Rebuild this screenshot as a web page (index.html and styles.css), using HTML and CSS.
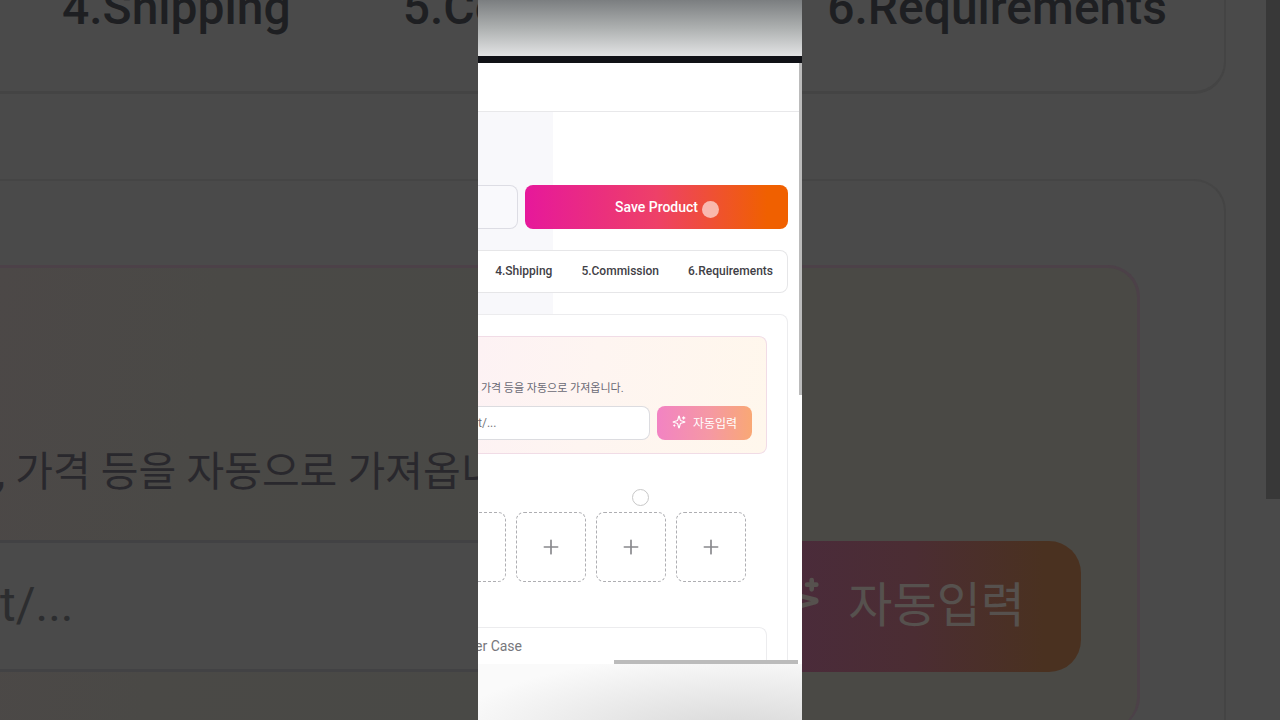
FILE: index.html
```html
<!DOCTYPE html>
<html lang="ko">
<head>
    <meta charset="UTF-8">
    <meta name="viewport" content="width=device-width, initial-scale=1.0">
    <title>Save Product</title>
    <link rel="stylesheet" href="styles.css">
</head>
<body>
    <div class="stage">
        <div class="backdrop backdrop-left">
            <div class="bd-tabs">
                <span>4.Shipping</span>
                <span>5.Commission</span>
            </div>
            <div class="bd-card">
                <div class="bd-import">
                    <p class="bd-hint">, 가격 등을 자동으로 가져옵니다.</p>
                    <input class="bd-input" type="text" placeholder="t/..." aria-label="Product link preview" tabindex="-1">
                </div>
            </div>
        </div>

        <main class="phone">
            <div class="phone-top"></div>
            <div class="app">
                <header class="app-header"></header>
                <div class="app-content">
                    <div class="actions">
                        <button type="button" class="cancel-button" aria-label="Cancel"></button>
                        <button type="button" class="save-button">Save Product</button>
                    </div>

                    <nav class="tabs">
                        <a href="#shipping">4.Shipping</a>
                        <a href="#commission">5.Commission</a>
                        <a href="#requirements">6.Requirements</a>
                    </nav>

                    <section class="card">
                        <div class="import-panel">
                            <p class="hint">, 가격 등을 자동으로 가져옵니다.</p>
                            <form class="import-form">
                                <input type="text" placeholder="t/..." aria-label="Product link">
                                <button type="button" class="fill-button">
                                    <svg class="icon" viewBox="0 0 24 24">
                                        <path d="M9.937 15.5A2 2 0 0 0 8.5 14.063l-6.135-1.582a.5.5 0 0 1 0-.962L8.5 9.936A2 2 0 0 0 9.937 8.5l1.582-6.135a.5.5 0 0 1 .963 0L14.063 8.5A2 2 0 0 0 15.5 9.937l6.135 1.581a.5.5 0 0 1 0 .964L15.5 14.063a2 2 0 0 0-1.437 1.437l-1.582 6.135a.5.5 0 0 1-.963 0z"/>
                                        <path d="M20 3v4M22 5h-4M4 17v2M5 18H3"/>
                                    </svg>
                                    자동입력
                                </button>
                            </form>
                        </div>

                        <div class="uploads">
                            <button type="button" class="upload" aria-label="Add image"></button>
                            <button type="button" class="upload" aria-label="Add image">
                                <svg viewBox="0 0 24 24"><path d="M4 12h16M12 4v16"/></svg>
                            </button>
                            <button type="button" class="upload" aria-label="Add image">
                                <svg viewBox="0 0 24 24"><path d="M4 12h16M12 4v16"/></svg>
                            </button>
                            <button type="button" class="upload" aria-label="Add image">
                                <svg viewBox="0 0 24 24"><path d="M4 12h16M12 4v16"/></svg>
                            </button>
                        </div>

                        <input class="name-input" type="text" placeholder="er Case" aria-label="Product name">
                    </section>
                </div>
                <div class="scroll-y"></div>
                <div class="scroll-x"></div>
                <div class="touch touch-save"></div>
                <div class="touch touch-idle"></div>
            </div>
            <div class="phone-bottom"></div>
        </main>

        <div class="backdrop backdrop-right">
            <div class="bd-tabs">
                <span>6.Requirements</span>
            </div>
            <div class="bd-card">
                <div class="bd-import">
                    <button type="button" class="bd-fill" tabindex="-1">
                        <svg class="icon" viewBox="0 0 24 24">
                            <path d="M9.937 15.5A2 2 0 0 0 8.5 14.063l-6.135-1.582a.5.5 0 0 1 0-.962L8.5 9.936A2 2 0 0 0 9.937 8.5l1.582-6.135a.5.5 0 0 1 .963 0L14.063 8.5A2 2 0 0 0 15.5 9.937l6.135 1.581a.5.5 0 0 1 0 .964L15.5 14.063a2 2 0 0 0-1.437 1.437l-1.582 6.135a.5.5 0 0 1-.963 0z"/>
                            <path d="M20 3v4M22 5h-4M4 17v2M5 18H3"/>
                        </svg>
                        자동입력
                    </button>
                </div>
            </div>
            <div class="bd-scroll"></div>
        </div>
    </div>
</body>
</html>
```
FILE: styles.css
```css
* {
    box-sizing: border-box;
    margin: 0;
    padding: 0;
}

body,
input,
button {
    font-family: Roboto, 'Noto Sans CJK KR', sans-serif;
}

body {
    background-color: #4a4a4a;
    overflow: hidden;
}

svg {
    fill: none;
    stroke: currentColor;
    stroke-width: 2;
    stroke-linecap: round;
    stroke-linejoin: round;
    flex-shrink: 0;
}

.stage {
    display: grid;
    grid-template-columns: minmax(0, 1fr) 324px minmax(0, 1fr);
    height: 100vh;
}

/* Enlarged, dimmed sides */
.backdrop {
    position: relative;
    overflow: hidden;
    background-color: #4a4a4a;
    color: #1e1f22;
}

.bd-tabs {
    display: flex;
    align-items: flex-end;
    gap: 112px;
    height: 94px;
    padding-bottom: 55px;
    border-bottom: 3px solid #444;
    font-size: 48px;
    line-height: 56px;
    font-weight: 500;
    white-space: nowrap;
}

.bd-card {
    height: 640px;
    margin-top: 85px;
    padding-top: 84px;
    border-top: 2px solid #454545;
}

.bd-import {
    height: 464px;
    padding-top: 172px;
    border-top: 3px solid #4c4148;
}

.backdrop-left .bd-tabs {
    padding-left: 62px;
}

.backdrop-left .bd-import {
    background: linear-gradient(100deg, #4c4847, #4a4946 40%, #494946);
}

.bd-hint {
    height: 60px;
    margin-left: -3px;
    padding-top: 2px;
    font-size: 41px;
    line-height: 60px;
    color: #29282d;
    white-space: nowrap;
}

.bd-input {
    display: block;
    width: 100%;
    height: 132px;
    margin-top: 40px;
    padding-bottom: 4px;
    border: solid #424244;
    border-width: 3px 0;
    background-color: #4a4a4a;
    font-size: 48px;
}

.backdrop-right .bd-tabs,
.backdrop-right .bd-card {
    margin-right: 54px;
    border-right: 2px solid #444;
}

.backdrop-right .bd-tabs {
    justify-content: flex-end;
    padding-right: 57px;
    border-radius: 0 0 32px 0;
}

.backdrop-right .bd-card {
    padding-right: 84px;
    border-radius: 0 32px 0 0;
}

.backdrop-right .bd-import {
    display: flex;
    justify-content: flex-end;
    align-items: flex-start;
    padding: 273px 56px 0 0;
    border-right: 3px solid #4c4148;
    border-radius: 0 32px 32px 0;
    background-color: #4a4945;
}

.bd-fill {
    display: flex;
    align-items: center;
    gap: 27px;
    flex-shrink: 0;
    height: 131px;
    padding: 0 56px 12px;
    border: none;
    border-radius: 32px;
    background: linear-gradient(90deg, #4a2a40, #4b2d33 55%, #4a3120 90%);
    color: #56514e;
    font-size: 48px;
}

.bd-fill .icon {
    width: 56px;
    height: 56px;
}

.bd-scroll {
    position: absolute;
    top: 0;
    right: 0;
    width: 14px;
    height: 499px;
    background-color: #383838;
}

/* Centre column */
.phone {
    display: flex;
    flex-direction: column;
    min-height: 0;
    background-color: #fff;
}

.phone-top {
    flex-shrink: 0;
    height: 63px;
    border-bottom: 7px solid #101116;
    background: linear-gradient(#7b7e80, #adb0b0 50%, #e2e3e4);
}

.phone-bottom {
    flex-shrink: 0;
    height: 56px;
    background: radial-gradient(ellipse at 80% 130%, #d6d6d6, #e8e8e8 40%, #fafafa 80%);
}

.app {
    position: relative;
    flex: 1;
    min-height: 0;
    overflow: hidden;
}

.app-header {
    height: 49px;
    border-bottom: 1px solid #e8e8ea;
}

.app-content {
    padding: 73px 14px 0 0;
    background: linear-gradient(90deg, #f8f8fb 75px, #fff 75px);
}

.actions {
    display: grid;
    grid-template-columns: 40px 1fr;
    gap: 7px;
    height: 44px;
}

.cancel-button {
    border: 1px solid #dddde4;
    border-left: none;
    border-radius: 0 8px 8px 0;
    background-color: #f9f9fc;
}

.save-button {
    border: none;
    border-radius: 8px;
    background: linear-gradient(90deg, #e6189b, #ee4068 50%, #f06000 92%);
    color: #fff;
    font-size: 14px;
    font-weight: 500;
}

.tabs {
    display: flex;
    justify-content: flex-end;
    align-items: center;
    gap: 29px;
    height: 43px;
    margin-top: 21px;
    padding: 0 14px 2px 0;
    border: 1px solid #e6e6e8;
    border-left: none;
    border-radius: 0 8px 8px 0;
    background-color: #fff;
}

.tabs a {
    color: #3f4046;
    font-size: 12px;
    font-weight: 500;
    text-decoration: none;
}

.card {
    height: 400px;
    margin-top: 21px;
    padding: 21px 20px 0 0;
    border: 1px solid #ececee;
    border-left: none;
    border-radius: 0 8px 8px 0;
    background-color: #fff;
}

.import-panel {
    height: 118px;
    padding: 43px 14px 0 0;
    border: 1px solid #f1dce6;
    border-left: none;
    border-radius: 0 8px 8px 0;
    background: linear-gradient(100deg, #fdf2f4, #fef5f1 40%, #fff7ec);
}

.hint {
    margin-left: -2px;
    color: #6a6a75;
    font-size: 11px;
    line-height: 18px;
    white-space: nowrap;
}

.import-form {
    display: grid;
    grid-template-columns: 1fr 95px;
    gap: 7px;
    height: 34px;
    margin-top: 8px;
}

.import-form input {
    min-width: 0;
    border: 1px solid #dcdce0;
    border-left: none;
    border-radius: 0 8px 8px 0;
    background-color: #fff;
    font-size: 12px;
}

input::placeholder {
    color: #77777c;
    opacity: 1;
}

.bd-input::placeholder {
    color: #2c2d2f;
}

.fill-button {
    display: flex;
    align-items: center;
    justify-content: center;
    gap: 7px;
    padding-bottom: 2px;
    border: none;
    border-radius: 8px;
    background: linear-gradient(90deg, #f283c3, #f598a4 55%, #f9a875);
    color: #fff;
    font-size: 12px;
}

.fill-button .icon {
    width: 14px;
    height: 14px;
}

.uploads {
    display: flex;
    justify-content: flex-end;
    gap: 10px;
    margin-top: 58px;
    padding-right: 21px;
}

.upload {
    display: flex;
    align-items: center;
    justify-content: center;
    flex-shrink: 0;
    width: 70px;
    height: 70px;
    border: 1px dashed #aeaeb2;
    border-radius: 8px;
    background-color: transparent;
    color: #88888c;
}

.upload svg {
    width: 20px;
    height: 20px;
}

.name-input {
    display: block;
    width: 100%;
    height: 36px;
    margin-top: 45px;
    border: 1px solid #ececee;
    border-width: 1px 1px 0 0;
    border-radius: 0 8px 0 0;
    font-size: 14px;
    text-indent: -3px;
}

.scroll-y,
.scroll-x,
.touch {
    position: absolute;
}

.scroll-y {
    top: 0;
    right: 0;
    width: 3px;
    height: 332px;
    background-color: #bbb;
}

.scroll-x {
    right: 4px;
    bottom: 0;
    width: 184px;
    height: 4px;
    background-color: #bbb;
}

.touch {
    width: 17px;
    height: 17px;
    border-radius: 50%;
}

.touch-save {
    top: 138px;
    left: 224px;
    background-color: rgba(255, 255, 255, 0.6);
}

.touch-idle {
    top: 426px;
    left: 154px;
    border: 1px solid #c8c8c8;
}
```
